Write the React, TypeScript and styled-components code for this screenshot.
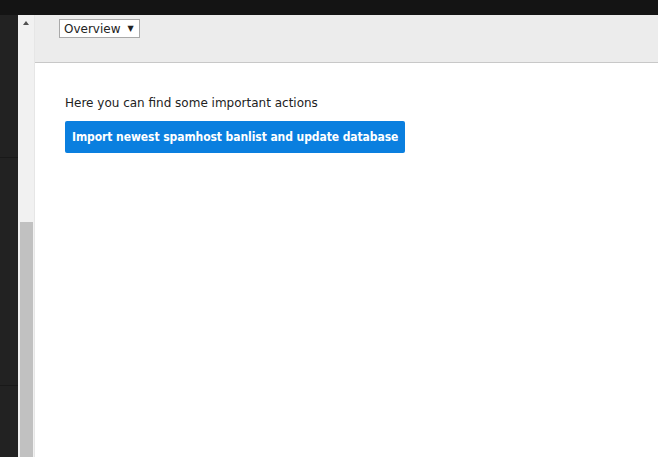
import React from "react";
import styled, { createGlobalStyle } from "styled-components";

const Global = createGlobalStyle`
  html, body { margin: 0; padding: 0; background: #fff; }
  #root { width: 658px; height: 457px; overflow: hidden; }
`;

const Page = styled.div`
  width: 658px;
  height: 457px;
  display: flex;
  flex-direction: column;
  font-family: Tahoma, "DejaVu Sans", sans-serif;
`;

const TopBar = styled.div`
  height: 15px;
  flex: none;
  background: #141414;
`;

const Body = styled.div`
  flex: 1;
  display: flex;
  min-height: 0;
`;

const Sidebar = styled.div`
  width: 18px;
  flex: none;
  background: #222222;
  display: flex;
  flex-direction: column;
`;

const SideSection = styled.div<{ $h?: number }>`
  height: ${(p) => (p.$h ? `${p.$h}px` : "auto")};
  flex: ${(p) => (p.$h ? "none" : "1")};
  border-bottom: ${(p) => (p.$h ? "1px solid #191919" : "none")};
`;

const ScrollTrack = styled.div`
  width: 17px;
  flex: none;
  background: #f1f1f1;
  display: flex;
  flex-direction: column;
  align-items: center;
  border-right: 1px solid #e6e6e6;
  box-sizing: border-box;
`;

const ArrowUp = styled.div`
  margin-top: 6px;
  width: 0;
  height: 0;
  border-left: 3.5px solid transparent;
  border-right: 3.5px solid transparent;
  border-bottom: 4px solid #505050;
`;

const Thumb = styled.div`
  margin-top: auto;
  width: 13px;
  height: 235px;
  background: #c1c1c1;
`;

const Main = styled.div`
  flex: 1;
  display: flex;
  flex-direction: column;
  background: #fff;
`;

const Header = styled.div`
  height: 48px;
  flex: none;
  display: flex;
  align-items: flex-start;
  background: #ececec;
  border-bottom: 1px solid #c8c8c8;
  padding: 4px 0 0 24px;
  box-sizing: border-box;
`;

const Select = styled.div`
  display: flex;
  align-items: center;
  gap: 7px;
  width: 81px;
  height: 19px;
  box-sizing: border-box;
  padding: 0 0 0 4px;
  background: #fff;
  border: 1px solid #a9a9a9;
  font-size: 12px;
  color: #222;
`;

const Caret = styled.span`
  font-size: 8px;
  color: #222;
`;

const Content = styled.div`
  padding: 33px 0 0 30px;
  display: flex;
  flex-direction: column;
  align-items: flex-start;
  gap: 10px;
`;

const Intro = styled.p`
  margin: 0;
  font-size: 12px;
  line-height: 15px;
  color: #222;
`;

const ActionButton = styled.button`
  height: 32px;
  padding: 0 7px;
  border: none;
  border-radius: 2px;
  background: #0a7fdf;
  color: #fff;
  font-family: "DejaVu Sans Condensed", Tahoma, "DejaVu Sans", sans-serif;
  font-size: 12px;
  font-weight: bold;
  letter-spacing: -0.08px;
  cursor: pointer;
`;

export default function App() {
  return (
    <>
      <Global />
      <Page>
        <TopBar />
        <Body>
          <Sidebar>
            <SideSection $h={142} />
            <SideSection $h={227} />
            <SideSection />
          </Sidebar>
          <ScrollTrack>
            <ArrowUp />
            <Thumb />
          </ScrollTrack>
          <Main>
            <Header>
              <Select>
                Overview <Caret>▼</Caret>
              </Select>
            </Header>
            <Content>
              <Intro>Here you can find some important actions</Intro>
              <ActionButton>Import newest spamhost banlist and update database</ActionButton>
            </Content>
          </Main>
        </Body>
      </Page>
    </>
  );
}
